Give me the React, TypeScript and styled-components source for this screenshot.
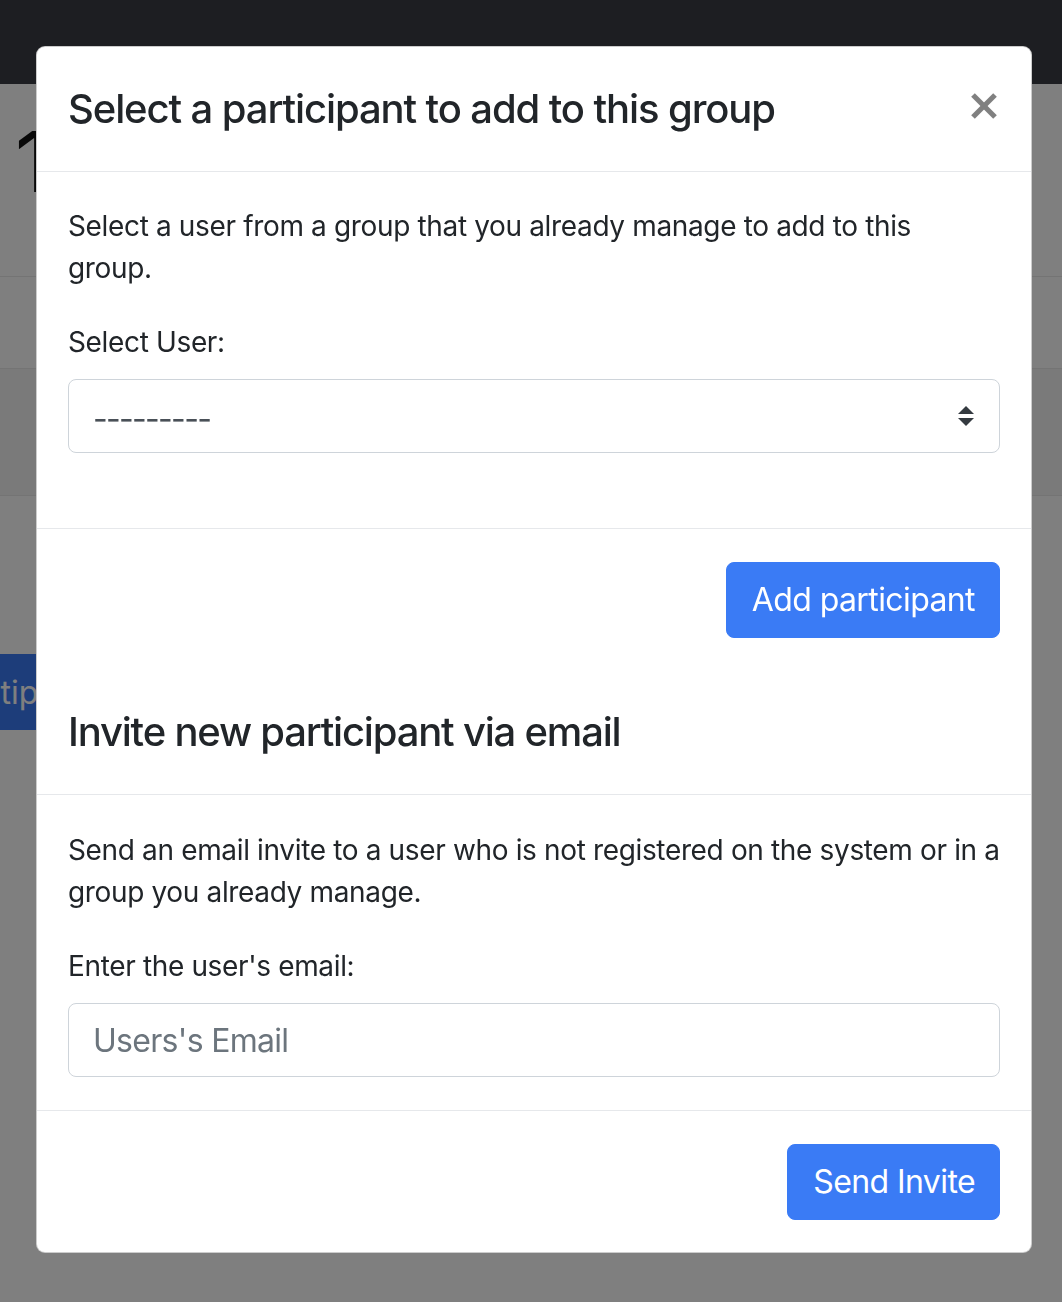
import React from "react";
import styled, { createGlobalStyle } from "styled-components";

const GlobalStyle = createGlobalStyle`
  html, body { margin: 0; padding: 0; }
  body {
    font-family: Inter, "Noto Sans", "Liberation Sans", sans-serif;
    color: #212529;
    background: #ffffff;
  }
  * { box-sizing: border-box; }
`;

/* ---------- page behind the modal ---------- */
const Page = styled.div`
  min-height: 100vh;
  background: #ffffff;
  overflow: hidden;
`;

const Navbar = styled.nav`
  height: 84px;
  background: #3b3d45;
`;

const PageHeader = styled.div`
  height: 193px;
  padding: 28px 0 0 15px;
  border-bottom: 1px solid #e8e8e8;
`;

const BigHeading = styled.h1`
  margin: 0;
  font-size: 84px;
  font-weight: 400;
  line-height: 1.2;
  color: #111;
`;

const PageRow = styled.div<{ $tall: number; $shade?: boolean }>`
  height: ${(p) => p.$tall}px;
  background: ${(p) => (p.$shade ? "#f4f4f4" : "#ffffff")};
  border-bottom: 1px solid #e8e8e8;
`;

const PageActions = styled.div`
  padding-top: 158px;
  display: flex;
`;

const PageButton = styled.button`
  margin-left: -150px;
  height: 76px;
  padding: 0 24px;
  border: 1px solid #3a7bf5;
  border-radius: 8px;
  background: #3a7bf5;
  color: #ffffff;
  font-family: inherit;
  font-size: 32px;
  white-space: nowrap;
`;

/* ---------- modal ---------- */
const Backdrop = styled.div`
  position: fixed;
  inset: 0;
  background: rgba(0, 0, 0, 0.5);
`;

const DialogLayer = styled.div`
  position: fixed;
  inset: 0;
  padding: 46px 30px 0 36px;
  display: flex;
  align-items: flex-start;
`;

const ModalContent = styled.div`
  width: 996px;
  background: #ffffff;
  border: 1px solid rgba(0, 0, 0, 0.2);
  border-radius: 9px;
  display: flex;
  flex-direction: column;
  overflow: hidden;
`;

const ModalHeader = styled.div`
  display: flex;
  align-items: center;
  justify-content: space-between;
  padding: 32px 31px;
  border-bottom: 1px solid #e6e8eb;
`;

const ModalTitle = styled.h5<{ $track: number }>`
  margin: 0;
  font-size: 40px;
  line-height: 60px;
  font-weight: 500;
  letter-spacing: ${(p) => p.$track}px;
  color: #212529;
`;

const CloseButton = styled.button`
  width: 30px;
  height: 30px;
  padding: 0;
  border: 0;
  background: transparent;
  display: flex;
  align-items: center;
  justify-content: center;
  margin-top: -6px;
  margin-right: 1px;
  cursor: pointer;
`;

const ModalBody = styled.div<{ $top: number; $bottom: number }>`
  padding: ${(p) => p.$top}px 31px ${(p) => p.$bottom}px 31px;
`;

const Paragraph = styled.p`
  margin: 0 -6px 32px 0;
  font-size: 28px;
  line-height: 42px;
  letter-spacing: -0.35px;
`;

const Label = styled.label`
  display: block;
  margin-bottom: 16px;
  font-size: 28px;
  line-height: 42px;
  letter-spacing: -0.35px;
`;

const SelectBox = styled.div`
  height: 74px;
  border: 1px solid #ced4da;
  border-radius: 8px;
  padding: 0 25px 0 24px;
  display: flex;
  align-items: center;
  justify-content: space-between;
  font-size: 32px;
  color: #495057;
`;

const SelectValue = styled.span`
  letter-spacing: -1.7px;
  padding-top: 5px;
`;

const EmailInput = styled.input`
  display: block;
  width: 100%;
  height: 74px;
  border: 1px solid #ced4da;
  border-radius: 8px;
  padding: 0 24px;
  font-family: inherit;
  font-size: 32px;
  letter-spacing: -0.7px;
  color: #495057;
  background: #ffffff;
  outline: none;
  &::placeholder {
    color: #6c757d;
  }
`;

const ModalFooter = styled.div`
  display: flex;
  justify-content: flex-end;
  padding: 25px 23px 24px;
  border-top: 1px solid #e6e8eb;
`;

const PrimaryButton = styled.button`
  margin: 8px;
  height: 76px;
  padding: 0 24px 0 25px;
  border: 1px solid #3a7bf5;
  border-radius: 8px;
  background: #3a7bf5;
  color: #ffffff;
  font-family: inherit;
  font-size: 32px;
  line-height: 48px;
  font-weight: 400;
  letter-spacing: -0.6px;
  cursor: pointer;
`;

const CloseIcon = () => (
  <svg width="26" height="26" viewBox="0 0 26 26" aria-hidden="true">
    <g stroke="#808080" strokeWidth="5.2" strokeLinecap="butt">
      <line x1="2" y1="2" x2="24" y2="24" />
      <line x1="24" y1="2" x2="2" y2="24" />
    </g>
  </svg>
);

const SelectArrows = () => (
  <svg width="16" height="20" viewBox="0 0 4 5" aria-hidden="true">
    <path d="M2 0L0 2h4zm0 5L0 3h4z" fill="#343a40" />
  </svg>
);

export default function App() {
  return (
    <>
      <GlobalStyle />
      <Page>
        <Navbar />
        <PageHeader>
          <BigHeading>1</BigHeading>
        </PageHeader>
        <PageRow $tall={92} />
        <PageRow $tall={127} $shade />
        <PageActions>
          <PageButton>Add multiple participants</PageButton>
        </PageActions>
      </Page>
      <Backdrop />
      <DialogLayer>
        <ModalContent role="dialog">
          <ModalHeader>
            <ModalTitle $track={-1.1}>
              Select a participant to add to this group
            </ModalTitle>
            <CloseButton aria-label="Close">
              <CloseIcon />
            </CloseButton>
          </ModalHeader>
          <ModalBody $top={33} $bottom={75}>
            <Paragraph>
              Select a user from a group that you already manage to add to this
              <br />
              group.
            </Paragraph>
            <Label>Select User:</Label>
            <SelectBox>
              <SelectValue>---------</SelectValue>
              <SelectArrows />
            </SelectBox>
          </ModalBody>
          <ModalFooter>
            <PrimaryButton>Add participant</PrimaryButton>
          </ModalFooter>
          <ModalHeader>
            <ModalTitle $track={-1.2}>Invite new participant via email</ModalTitle>
          </ModalHeader>
          <ModalBody $top={34} $bottom={33}>
            <Paragraph>
              Send an email invite to a user who is not registered on the system
              or in a group you already manage.
            </Paragraph>
            <Label>Enter the user's email:</Label>
            <EmailInput placeholder="Users's Email" />
          </ModalBody>
          <ModalFooter>
            <PrimaryButton>Send Invite</PrimaryButton>
          </ModalFooter>
        </ModalContent>
      </DialogLayer>
    </>
  );
}
